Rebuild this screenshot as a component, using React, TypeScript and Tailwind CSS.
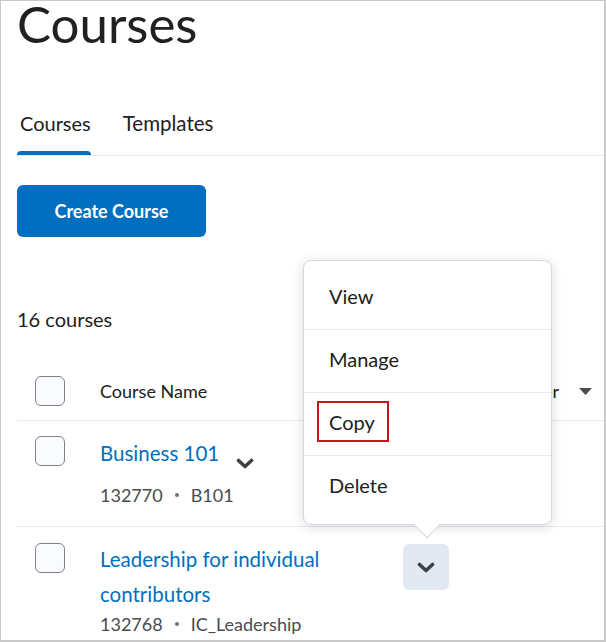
import React from "react";

const Chevron = ({ className = "" }: { className?: string }) => (
  <svg viewBox="0 0 18 11" className={className} fill="none">
    <polyline points="2.5,2.5 9,8.5 15.5,2.5" stroke="#3f4245" strokeWidth="3.6" strokeLinecap="round" strokeLinejoin="round" />
  </svg>
);

const Checkbox = () => (
  <div className="h-[30px] w-[30px] shrink-0 rounded-[6px] border border-[#7c8286] bg-[#f9fbff]" />
);

const rows = [
  { title: "Business 101", code: "132770", short: "B101", open: false },
  { title: "Leadership for individual contributors", code: "132768", short: "IC_Leadership", open: true },
];

const menuItems = ["View", "Manage", "Copy", "Delete"];

export default function App() {
  return (
    <div className="relative h-[642px] w-[606px] overflow-hidden border-t border-l border-r-2 border-b-2 border-[#c9c9c9] bg-white font-[Lato,sans-serif] text-[#202122]">
      <div className="pl-[16px]">
        <h1 className="mt-[-3px] text-[51px] leading-[51px] font-normal">Courses</h1>

        {/* Tabs */}
        <div className="mt-[62px] flex gap-[32px] border-b border-[#e3e9f1]">
          <div className="flex flex-col">
            <span className="pl-[3px] text-[20px] leading-[24px]">Courses</span>
            <div className="mt-[16px] h-[4px] rounded-t-[4px] bg-[#006fbf]" />
          </div>
          <div className="flex flex-col">
            <span className="text-[20.5px] leading-[24px]">Templates</span>
          </div>
        </div>

        <button className="mt-[29px] flex h-[52px] w-[189px] items-center justify-center rounded-[6px] bg-[#006fbf] text-[18px] font-bold text-white">
          Create Course
        </button>

        <p className="mt-[70px] text-[20px] leading-[24px]">16 courses</p>

        {/* Table header */}
        <div className="mt-[45px] flex items-center border-b border-[#e3e9f1] pb-[14px]">
          <div className="ml-[18px]">
            <Checkbox />
          </div>
          <span className="ml-[35px] text-[18px]">Course Name</span>
          <div className="ml-auto flex items-center gap-[20px] pr-[12px]">
            <span className="text-[18px]">Semester</span>
            <svg viewBox="0 0 13 7" className="h-[7px] w-[13px]">
              <polygon points="0,0 13,0 6.5,7" fill="#494c4e" />
            </svg>
          </div>
        </div>

        {/* Rows */}
        {rows.map((r, i) => (
          <div key={r.code} className="flex border-b border-[#e3e9f1] pt-[15px] pb-[19px]">
            <div className={`ml-[18px] ${i === 0 ? "" : "mt-[1px]"}`}>
              <Checkbox />
            </div>
            <div className="ml-[35px] flex flex-col">
              <div className="flex items-start">
                <a className="max-w-[300px] text-[20.5px] leading-[35px] text-[#006fbf]">{r.title}</a>
                <div
                  className={`ml-[3px] flex h-[46px] w-[46px] shrink-0 items-center justify-center rounded-[6px] ${
                    r.open ? "mt-[2px] bg-[#e3e9f1]" : "mt-[4px]"
                  }`}
                >
                  <Chevron className="h-[11px] w-[18px]" />
                </div>
              </div>
              <div className={`flex items-center text-[18px] leading-[24px] text-[#494c4e] ${i === 0 ? "-mt-[3px]" : ""}`}>
                <span>{r.code}</span>
                <span className="mx-[12px] inline-block h-[4px] w-[4px] rounded-full bg-[#6e7477]" />
                <span>{r.short}</span>
              </div>
            </div>
          </div>
        ))}
      </div>

      {/* Context menu */}
      <div className="absolute left-[302px] top-[259px] w-[249px] rounded-[8px] border border-[#d3d9e3] bg-white py-[6px] shadow-[0_2px_12px_rgba(0,0,0,0.15)]">
        {menuItems.map((item, i) => (
          <div
            key={item}
            className={`relative flex items-center pb-[5px] pl-[25px] text-[20px] ${
              i > 0 ? "h-[63px] border-t border-[#e3e9f1]" : "h-[62px]"
            }`}
          >
            {item}
            {item === "Copy" && (
              <div className="absolute left-[13px] top-[8px] h-[41px] w-[72px] border-2 border-[#c4161c]" />
            )}
          </div>
        ))}
        <div className="absolute left-[113px] top-[253px] h-[20px] w-[20px] rotate-45 border-r border-b border-[#d3d9e3] bg-white" />
      </div>
    </div>
  );
}
